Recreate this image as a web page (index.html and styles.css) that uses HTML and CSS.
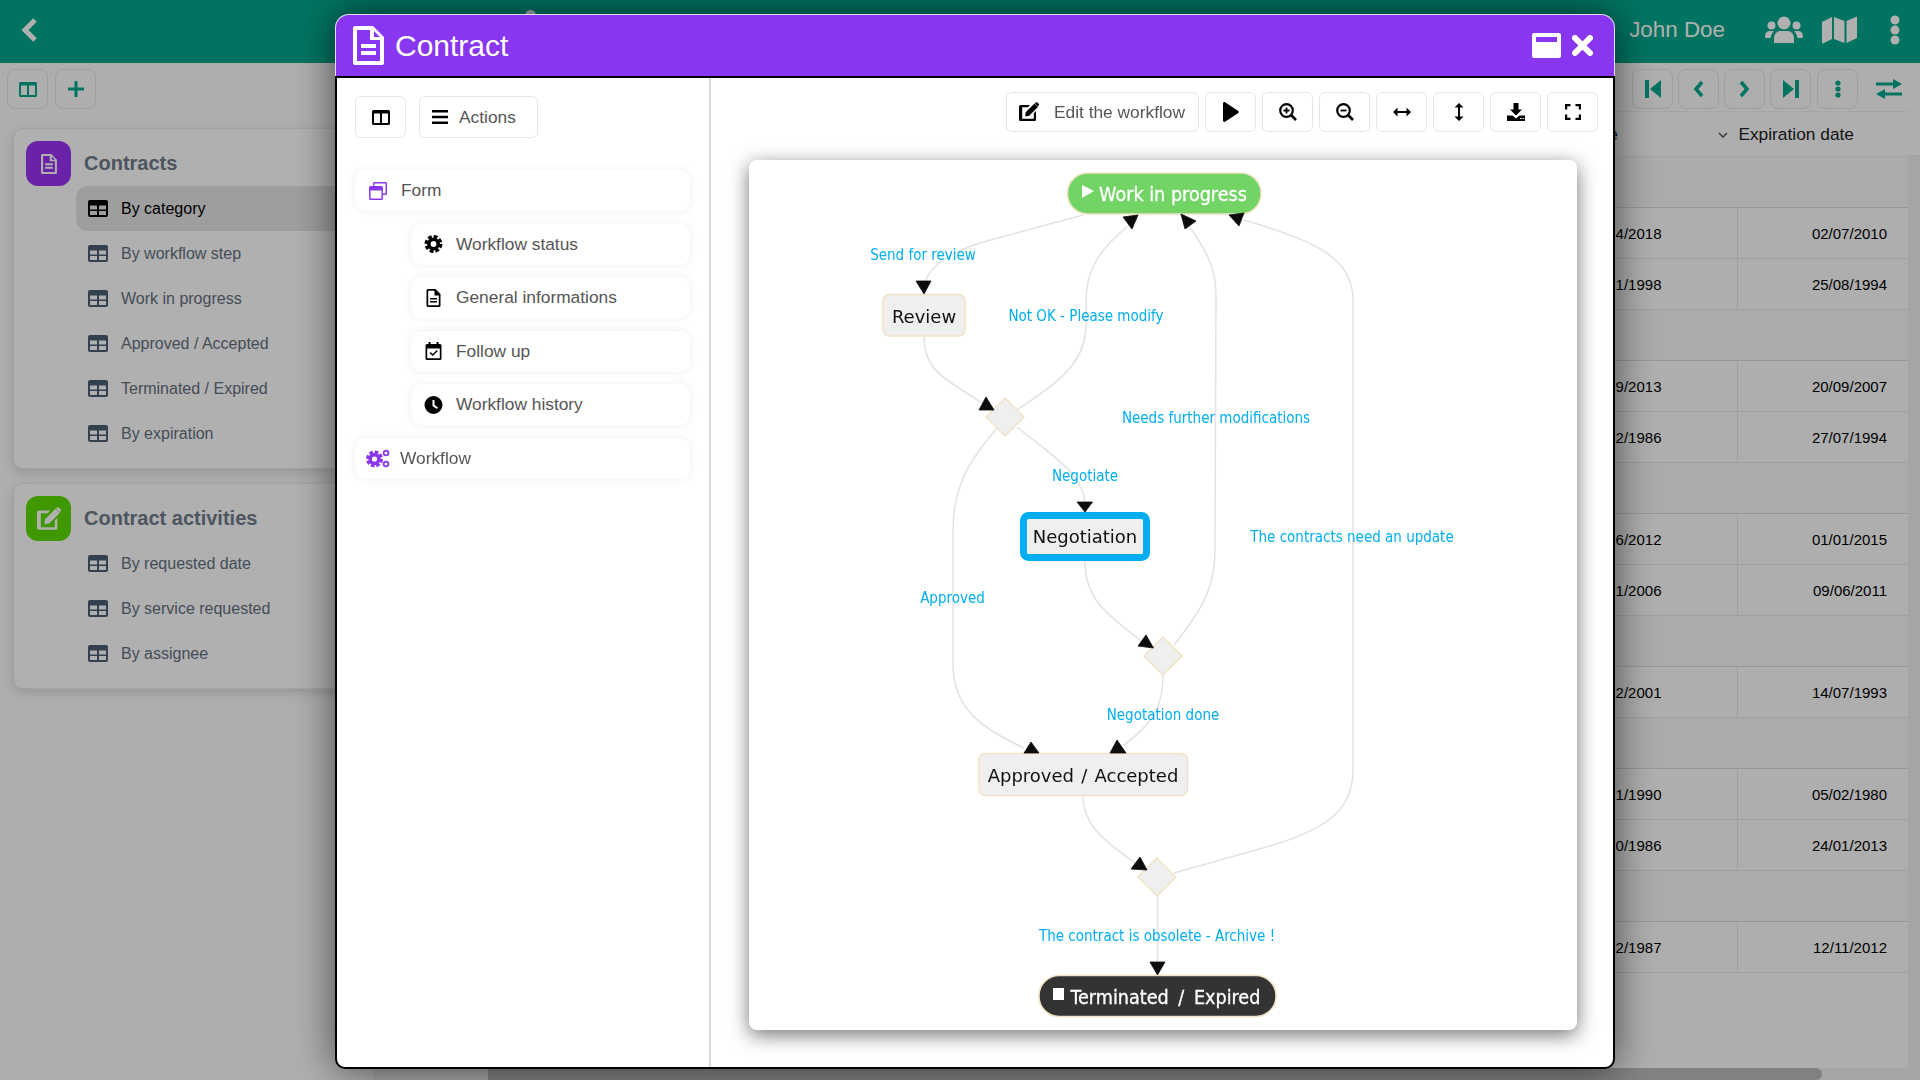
FILE: index.html
```html
<!DOCTYPE html>
<html>
<head>
<meta charset="UTF-8">
<title>Contract</title>
<link rel="stylesheet" href="styles.css">
</head>
<body>
<!-- icon sprites -->
<svg class="sprites" width="0" height="0">
  <symbol id="i-table" viewBox="0 0 20 17"><path fill-rule="evenodd" d="M2 0h16a2 2 0 0 1 2 2v13a2 2 0 0 1-2 2H2a2 2 0 0 1-2-2V2a2 2 0 0 1 2-2zM2 5.5v4h7v-4zM11 5.5v4h7v-4zM2 11v4h7v-4zM11 11v4h7v-4z"/></symbol>
  <symbol id="i-cols" viewBox="0 0 18 15"><path fill-rule="evenodd" d="M1.5 0h15A1.5 1.5 0 0 1 18 1.5v12a1.5 1.5 0 0 1-1.5 1.5h-15A1.5 1.5 0 0 1 0 13.5v-12A1.5 1.5 0 0 1 1.500 0zM2 3.500V13h6V3.500zM10 3.500V13h6V3.500z"/></symbol>
  <symbol id="i-doc" viewBox="0 0 31 39"><path fill-rule="evenodd" d="M2 0h18l11 11v26a2 2 0 0 1-2 2H2a2 2 0 0 1-2-2V2a2 2 0 0 1 2-2zM4 4v31h23V14h-10V4zM21 5v6h6zM8 18h15v4H8zM8 25h15v4H8z"/></symbol>
  <symbol id="i-edit" viewBox="0 0 20 20"><path d="M1.5 3h9.500l-2.200 2.200H3.200v11.600h11.600v-5.600L17 9v8.500A1.500 1.500 0 0 1 15.500 19h-14A1.500 1.500 0 0 1 0 17.500v-13A1.500 1.500 0 0 1 1.500 3z"/><path d="M15.5 1.500l3.500 3.500-8.800 8.800-4 .6.500-4.100zM16.700.6a1.200 1.200 0 0 1 1.700 0l1.200 1.200a1.200 1.200 0 0 1 0 1.700l-.8.800-3-3z"/></symbol>
  <symbol id="i-gear" viewBox="0 0 20 20"><circle cx="10" cy="10" r="5.2" fill="none" stroke="currentColor" stroke-width="4"/><circle cx="10" cy="10" r="8.2" fill="none" stroke="currentColor" stroke-width="3.5" stroke-dasharray="4.2 2.24"/></symbol>
  <symbol id="i-file" viewBox="0 0 14 18"><path fill-rule="evenodd" d="M1.5 0H9l5 5v11.500a1.500 1.500 0 0 1-1.500 1.500h-11A1.500 1.500 0 0 1 0 16.500v-15A1.500 1.500 0 0 1 1.500 0zM1.700 1.700v14.600h10.600V6.500H8V1.700zM3.500 9h7v1.500h-7zM3.500 12h7v1.500h-7z"/></symbol>
  <symbol id="i-cal" viewBox="0 0 16 18"><path fill-rule="evenodd" d="M3 0h2v2h6V0h2v2h1.500A1.500 1.500 0 0 1 16 3.500v13a1.500 1.500 0 0 1-1.500 1.500h-13A1.500 1.500 0 0 1 0 16.500v-13A1.500 1.500 0 0 1 1.500 2H3zM1.700 6.500v9.800h12.600V6.500z"/><path d="M11.300 8l1 1-5 5L4 11l1-1 2.300 2z"/></symbol>
  <symbol id="i-clock" viewBox="0 0 18 18"><path fill-rule="evenodd" d="M9 0a9 9 0 1 1 0 18A9 9 0 0 1 9 0zM8 4v6l4.400 3 1.100-1.600L10 9V4z"/></symbol>
  <symbol id="i-windows" viewBox="0 0 18 18"><path fill="none" stroke="currentColor" stroke-width="1.5" d="M4.800 3.800V1.500a.8.8 0 0 1 .8-.8h10.900a.8.800 0 0 1 .8.800v10a.8.8 0 0 1-.8.800h-2.900"/><rect x=".8" y="4.8" width="12.4" height="12.4" rx=".8" fill="none" stroke="currentColor" stroke-width="1.5"/><rect x="1" y="5" width="12" height="3.5"/></symbol>
  <symbol id="i-gears" viewBox="0 0 24 19"><circle cx="8.5" cy="10" r="4.4" fill="none" stroke="currentColor" stroke-width="3.6"/><circle cx="8.5" cy="10" r="7" fill="none" stroke="currentColor" stroke-width="3" stroke-dasharray="3.6 1.9"/><circle cx="20" cy="4" r="2.4" fill="none" stroke="currentColor" stroke-width="1.8"/><circle cx="20" cy="15" r="2.4" fill="none" stroke="currentColor" stroke-width="1.8"/></symbol>
  <symbol id="i-play" viewBox="0 0 16 20"><path d="M0 1.500C0 .4 1.100-.3 2 .2l13 8.500a1.500 1.500 0 0 1 0 2.600L2 19.800c-.9.500-2-.2-2-1.300z"/></symbol>
  <symbol id="i-zoomin" viewBox="0 0 18 18"><circle cx="7.5" cy="7.5" r="6.3" fill="none" stroke="currentColor" stroke-width="2.2"/><path fill="none" stroke="currentColor" stroke-width="2.6" d="M12 12l5 5"/><path fill="none" stroke="currentColor" stroke-width="1.8" d="M4.500 7.500h6M7.500 4.500v6"/></symbol>
  <symbol id="i-zoomout" viewBox="0 0 18 18"><circle cx="7.5" cy="7.5" r="6.3" fill="none" stroke="currentColor" stroke-width="2.2"/><path fill="none" stroke="currentColor" stroke-width="2.6" d="M12 12l5 5"/><path fill="none" stroke="currentColor" stroke-width="1.8" d="M4.500 7.500h6"/></symbol>
  <symbol id="i-ah" viewBox="0 0 18 10"><path d="M0 5l4.500-4.500V4h9V.5L18 5l-4.500 4.500V6h-9v3.500z"/></symbol>
  <symbol id="i-av" viewBox="0 0 10 18"><path d="M5 0l4.500 4.500H6v9h3.500L5 18 .5 13.500H4v-9H.5z"/></symbol>
  <symbol id="i-down" viewBox="0 0 18 18"><path d="M6.500 0h5v6.500H15l-6 6-6-6h3.500z"/><path fill-rule="evenodd" d="M0 12.500h5.500l3.500 3 3.500-3H18V18H0zM13 15v1h1.500v-1zM15.500 15v1H17v-1z"/></symbol>
  <symbol id="i-full" viewBox="0 0 16 16"><path fill="none" stroke="currentColor" stroke-width="2.2" d="M1.100 5.500V1.100h4.400M10.500 1.100h4.400v4.400M14.900 10.500v4.400h-4.400M5.500 14.900H1.100v-4.400"/></symbol>
</svg>

<header class="topbar">
  <svg class="back" width="17" height="26" viewBox="0 0 17 26"><path d="M14 3L4 13l10 10" fill="none" stroke="currentColor" stroke-width="5"/></svg>
  <span class="topdot"></span>
  <span class="username">John Doe</span>
  <svg class="topicon" width="38" height="28" viewBox="0 0 38 28" fill="currentColor"><circle cx="19" cy="7" r="6.5"/><circle cx="6.5" cy="9.5" r="4"/><circle cx="31.5" cy="9.5" r="4"/><path d="M9 27v-5c0-4 3-7 6-7h8c3 0 6 3 6 7v5z"/><path d="M0 21c0-4 2-6 5-6h4c-2 2-3 4-3.500 7H1a1 1 0 0 1-1-1zM38 21c0-4-2-6-5-6h-4c2 2 3 4 3.500 7H37a1 1 0 0 0 1-1z"/></svg>
  <svg class="topicon mapicon" width="35" height="28" viewBox="0 0 35 28" fill="currentColor"><path d="M0 6l10-5v22L1 27.500c-.5 0-1-.3-1-1zM12 1l10.500 4v22L12 23zM24.500 5L35 .5V22l-10.500 5z"/></svg>
  <svg class="topicon moreicon" width="10" height="30" viewBox="0 0 10 30" fill="currentColor"><circle cx="5" cy="5" r="4.5"/><circle cx="5" cy="15" r="4.5"/><circle cx="5" cy="25" r="4.5"/></svg>
</header>

<div class="page">
  <aside class="sidebar">
    <div class="sidetools">
      <button class="toolbtn"><svg width="18" height="15"><use href="#i-cols"/></svg></button>
      <button class="toolbtn"><svg width="16" height="16" viewBox="0 0 16 16"><path d="M6.500 0h3v6.500H16v3H9.500V16h-3V9.500H0v-3h6.500z"/></svg></button>
    </div>

    <section class="navcard">
      <div class="navhead">
        <span class="navbadge purple"><svg width="16" height="20"><use href="#i-doc"/></svg></span>
        <h3>Contracts</h3>
      </div>
      <a class="navrow active"><svg width="20" height="17"><use href="#i-table"/></svg>By category</a>
      <a class="navrow"><svg width="20" height="17"><use href="#i-table"/></svg>By workflow step</a>
      <a class="navrow"><svg width="20" height="17"><use href="#i-table"/></svg>Work in progress</a>
      <a class="navrow"><svg width="20" height="17"><use href="#i-table"/></svg>Approved / Accepted</a>
      <a class="navrow"><svg width="20" height="17"><use href="#i-table"/></svg>Terminated / Expired</a>
      <a class="navrow"><svg width="20" height="17"><use href="#i-table"/></svg>By expiration</a>
    </section>

    <section class="navcard">
      <div class="navhead">
        <span class="navbadge green"><svg width="24" height="24"><use href="#i-edit"/></svg></span>
        <h3>Contract activities</h3>
      </div>
      <a class="navrow"><svg width="20" height="17"><use href="#i-table"/></svg>By requested date</a>
      <a class="navrow"><svg width="20" height="17"><use href="#i-table"/></svg>By service requested</a>
      <a class="navrow"><svg width="20" height="17"><use href="#i-table"/></svg>By assignee</a>
    </section>
  </aside>

  <main class="listing">
    <div class="pager">
      <button class="toolbtn"><svg width="16" height="18" viewBox="0 0 16 18"><path d="M0 0h4v18H0zM16 0v18L5 9z"/></svg></button>
      <button class="toolbtn"><svg width="11" height="18" viewBox="0 0 11 18"><path d="M9 2L3 9l6 7" fill="none" stroke="currentColor" stroke-width="3.5"/></svg></button>
      <button class="toolbtn"><svg width="11" height="18" viewBox="0 0 11 18"><path d="M2 2l6 7-6 7" fill="none" stroke="currentColor" stroke-width="3.5"/></svg></button>
      <button class="toolbtn"><svg width="16" height="18" viewBox="0 0 16 18"><path d="M16 0h-4v18h4zM0 0v18l11-9z"/></svg></button>
      <button class="toolbtn"><svg width="6" height="18" viewBox="0 0 6 18"><circle cx="3" cy="3" r="2.6"/><circle cx="3" cy="9" r="2.6"/><circle cx="3" cy="15" r="2.6"/></svg></button>
      <svg class="swap" width="26" height="20" viewBox="0 0 26 20"><path d="M0 3.500h17V0l9 5-9 5V6.500H0zM26 13.500H9V10l-9 5 9 5v-3.500h17z"/></svg>
    </div>

    <div class="tablewrap">
      <table class="grid">
        <thead>
          <tr>
            <th class="col-a">e<svg width="10" height="6" viewBox="0 0 10 6"><path d="M1 1l4 4 4-4" fill="none" stroke="currentColor" stroke-width="1.5"/></svg></th>
            <th class="col-b">Expiration date</th>
          </tr>
        </thead>
        <tbody>
          <tr class="group"><td colspan="2"></td></tr>
          <tr><td class="col-a">4/2018</td><td class="col-b">02/07/2010</td></tr>
          <tr><td class="col-a">1/1998</td><td class="col-b">25/08/1994</td></tr>
          <tr class="group"><td colspan="2"></td></tr>
          <tr><td class="col-a">9/2013</td><td class="col-b">20/09/2007</td></tr>
          <tr><td class="col-a">2/1986</td><td class="col-b">27/07/1994</td></tr>
          <tr class="group"><td colspan="2"></td></tr>
          <tr><td class="col-a">6/2012</td><td class="col-b">01/01/2015</td></tr>
          <tr><td class="col-a">1/2006</td><td class="col-b">09/06/2011</td></tr>
          <tr class="group"><td colspan="2"></td></tr>
          <tr><td class="col-a">2/2001</td><td class="col-b">14/07/1993</td></tr>
          <tr class="group"><td colspan="2"></td></tr>
          <tr><td class="col-a">1/1990</td><td class="col-b">05/02/1980</td></tr>
          <tr><td class="col-a">0/1986</td><td class="col-b">24/01/2013</td></tr>
          <tr class="group"><td colspan="2"></td></tr>
          <tr><td class="col-a">2/1987</td><td class="col-b">12/11/2012</td></tr>
        </tbody>
      </table>
      <div class="vscroll"></div>
    </div>
    <div class="hscroll"><div class="hthumb"></div></div>
  </main>
</div>

<div class="backdrop"></div>

<div class="modal">
  <div class="modal-title">
    <svg width="31" height="39"><use href="#i-doc"/></svg>
    <span class="modal-name">Contract</span>
    <svg class="winbtn" width="29" height="25" viewBox="0 0 29 25"><path fill-rule="evenodd" d="M2 0h25a2 2 0 0 1 2 2v21a2 2 0 0 1-2 2H2a2 2 0 0 1-2-2V2a2 2 0 0 1 2-2zM4 4v5h21V4z"/></svg>
    <svg class="winbtn" width="21" height="21" viewBox="0 0 21 21"><path d="M3 3l15 15M18 3L3 18" stroke="currentColor" stroke-width="6" stroke-linecap="round"/></svg>
  </div>

  <div class="modal-body">
    <div class="formnav">
      <div class="formtools">
        <button class="btn square"><svg width="18" height="15"><use href="#i-cols"/></svg></button>
        <button class="btn actions"><svg width="16" height="14" viewBox="0 0 16 14"><path d="M0 0h16v2.500H0zM0 5.700h16v2.500H0zM0 11.500h16V14H0z"/></svg>Actions</button>
      </div>
      <div class="formlist">
        <a class="formrow"><svg class="accent" width="18" height="18"><use href="#i-windows"/></svg>Form</a>
        <a class="formrow sub"><svg width="18" height="18"><use href="#i-gear"/></svg>Workflow status</a>
        <a class="formrow sub"><svg width="14" height="18"><use href="#i-file"/></svg>General informations</a>
        <a class="formrow sub"><svg width="16" height="18"><use href="#i-cal"/></svg>Follow up</a>
        <a class="formrow sub"><svg width="18" height="18"><use href="#i-clock"/></svg>Workflow history</a>
        <a class="formrow wide"><svg class="accent" width="24" height="19"><use href="#i-gears"/></svg>Workflow</a>
      </div>
    </div>

    <div class="flowpane">
      <div class="flowtools">
        <button class="btn edit"><svg width="20" height="20"><use href="#i-edit"/></svg>Edit the workflow</button>
        <button class="btn icon"><svg width="16" height="20"><use href="#i-play"/></svg></button>
        <button class="btn icon"><svg width="18" height="18"><use href="#i-zoomin"/></svg></button>
        <button class="btn icon"><svg width="18" height="18"><use href="#i-zoomout"/></svg></button>
        <button class="btn icon"><svg width="18" height="10"><use href="#i-ah"/></svg></button>
        <button class="btn icon"><svg width="10" height="18"><use href="#i-av"/></svg></button>
        <button class="btn icon"><svg width="18" height="18"><use href="#i-down"/></svg></button>
        <button class="btn icon"><svg width="16" height="16"><use href="#i-full"/></svg></button>
      </div>

      <div class="flowcard">
        <!-- workflow chart, viewBox keeps the chart's own coordinates -->
        <svg class="chart" width="828" height="870" viewBox="749 160 828 870">
          <g class="edges">
            <path d="M1083 215L983 242C950 252 924 268 924 290"/>
            <path d="M1017 410C1055 384 1086 365 1086 325L1086 300C1086 265 1105 245 1129 225"/>
            <path d="M1174 645C1200 612 1215 590 1215 550L1216 295C1216 265 1203 245 1186 222"/>
            <path d="M1174 873L1270 846C1330 828 1353 808 1353 770L1353 300C1353 255 1310 240 1244 220"/>
            <path d="M924 336C924 372 945 378 985 405"/>
            <path d="M1017 427C1055 458 1085 475 1085 505"/>
            <path d="M997 428C970 460 953 485 953 530L953 665C953 710 985 730 1024 748"/>
            <path d="M1085 561C1085 600 1105 612 1146 645"/>
            <path d="M1163 675C1163 705 1155 722 1124 745"/>
            <path d="M1083 796C1083 825 1105 842 1138 865"/>
            <path d="M1157.5 895L1157.5 962"/>
          </g>

          <g class="nodes">
            <rect class="node start" x="1067.5" y="173" width="193.5" height="41" rx="20"/>
            <rect class="node" x="883" y="294.5" width="82" height="41.5" rx="6"/>
            <path class="node" d="M1005 398L1024 417 1005 436 986 417z"/>
            <rect class="node current" x="1023.5" y="515.5" width="123" height="42" rx="5"/>
            <path class="node" d="M1163 637L1182 656 1163 675 1144 656z"/>
            <rect class="node" x="979" y="753.5" width="208.5" height="42" rx="6"/>
            <path class="node" d="M1157 858L1176 877 1157 896 1138 877z"/>
            <rect class="node end" x="1039" y="975.5" width="237" height="41" rx="20"/>
          </g>

          <g class="arrows">
            <path d="M916 281L931 281 924 294z"/>
            <path d="M1123 217L1138 215 1132 229z"/>
            <path d="M1181 214L1196 221 1185 229z"/>
            <path d="M1229 215L1244 213 1239 226z"/>
            <path d="M986 397L994 410 979 410z"/>
            <path d="M1077 502L1092.5 502 1085 512z"/>
            <path d="M1031 742L1039 753 1024 753z"/>
            <path d="M1146 635L1153.5 648 1138 646z"/>
            <path d="M1117 740L1126 753 1110 753z"/>
            <path d="M1140 857L1147 870 1131 869z"/>
            <path d="M1150 962L1165 962 1157.5 975z"/>
          </g>

          <g class="labels">
            <text x="923" y="260">Send for review</text>
            <text x="1086" y="321">Not OK - Please modify</text>
            <text x="1216" y="423">Needs further modifications</text>
            <text x="1085" y="481">Negotiate</text>
            <text x="1352" y="542">The contracts need an update</text>
            <text x="952.5" y="603">Approved</text>
            <text x="1163" y="720">Negotation done</text>
            <text x="1157" y="941">The contract is obsolete - Archive !</text>
          </g>

          <g class="titles">
            <path class="white" d="M1082 185L1094 191 1082 198z"/>
            <text class="white bold" x="1173" y="201">Work in progress</text>
            <text x="924" y="323">Review</text>
            <text x="1085" y="543">Negotiation</text>
            <text class="spaced" x="1083" y="782">Approved / Accepted</text>
            <rect class="white" x="1053" y="988" width="11" height="12"/>
            <text class="white bold spaced-wide" x="1165.500" y="1004">Terminated / Expired</text>
          </g>
        </svg>
      </div>
    </div>
  </div>
</div>
</body>
</html>
```

FILE: styles.css
```css
*{box-sizing:border-box}
html,body{margin:0;height:100%;overflow:hidden}
body{font-family:"Liberation Sans",Arial,sans-serif;background:#fcfcfc;color:#333}
svg{fill:currentColor;display:block;flex:none}
button{font-family:inherit;cursor:pointer}
.sprites{position:absolute}

/* top bar */
.topbar{height:63px;background:#00a88c;color:#fff;display:flex;align-items:center;padding-left:21px}
.back{margin-top:-4px}
.topdot{width:11px;height:11px;border-radius:50%;background:#fff;margin-left:487px;margin-top:-32px}
.username{font-size:22.4px;margin-left:auto;margin-top:-3px}
.topicon{margin-left:40px;margin-top:-3px}
.mapicon{margin-left:19px}
.moreicon{margin-left:33px;margin-right:20px}

.page{display:flex;height:1017px}

/* left navigation */
.sidebar{width:373px;flex:none;padding:6px 0 0 7px}
.sidetools{display:flex;gap:7px;margin-bottom:19px}
.toolbtn{width:41px;height:40px;background:#fcfcfc;border:1px solid #e6e6e6;border-radius:8px;color:#00a88c;display:flex;align-items:center;justify-content:center;padding:0}
.navcard{margin:0 0 14px 6px;background:#fff;border:1px solid #ececec;border-radius:10px;padding:12px 0 12px 12px;box-shadow:0 4px 12px rgba(0,0,0,.14)}
.navhead{display:flex;align-items:center;gap:13px;height:45px}
.navhead h3{margin:0;font-size:20px;color:#6f7b8c}
.navbadge{width:45px;height:45px;border-radius:12px;display:flex;align-items:center;justify-content:center;color:#fff}
.purple{background:#9a33f4}
.green{background:#5ddc00}
.navrow{height:45px;margin-left:50px;padding-left:12px;display:flex;align-items:center;gap:13px;font-size:16px;color:#64707f;border-radius:12px 0 0 12px}
.navrow svg{color:#4b5d74}
.navrow.active{background:#e5e5e5;color:#000}
.navrow.active svg{color:#000}

/* listing behind the dialog */
.listing{flex:1;display:flex;flex-direction:column;min-width:0}
.pager{display:flex;justify-content:flex-end;align-items:center;gap:5px;padding:4px 18px 0 0;height:48px}
.pager .toolbtn:last-of-type{margin-left:1px}
.swap{color:#00a88c;margin-left:13px}
.tablewrap{flex:1;display:flex;justify-content:flex-end;min-height:0}
.grid{border-collapse:collapse;table-layout:fixed;width:301px;align-self:flex-start;font-size:15px;color:#000}
.grid th{height:45px;font-weight:normal;font-size:17.33px;text-align:right;border-top:1px solid #f0f0f0;border-bottom:1px solid #eee;color:#222}
.grid th svg{display:inline-block;margin-left:100px;vertical-align:middle;color:#555}
.grid td{height:51px;text-align:right;border-bottom:1px solid #e6e6e6}
.grid .col-a{width:130px;padding:0 75px 0 0}
.grid .col-b{width:171px;padding:0 21px 0 0;border-left:1px solid #e6e6e6}
.grid th.col-a{padding-right:9px}
.grid th.col-b{padding-right:54px;border-left:none}
.grid .group td{border-bottom-color:#ddd;background:#f8f8f8}
.vscroll{width:12px;flex:none;background:#f0f0f0;margin-top:44px}
.hscroll{height:12px;flex:none;background:#f0f0f0;display:flex;padding-left:115px}
.hthumb{width:1334px;background:#bcbcbc;border-radius:0 6px 6px 0}

.backdrop{position:fixed;inset:0;background:rgba(0,0,0,.31)}

/* dialog */
.modal{position:fixed;left:335px;top:14px;width:1280px;height:1055px;display:flex;flex-direction:column;box-shadow:0 0 40px rgba(0,0,0,.6);border-radius:14px 14px 10px 10px}
.modal-title{height:62px;flex:none;background:#8936f0;color:#fff;border:1px solid #e6dcf5;border-bottom:none;border-radius:14px 14px 0 0;display:flex;align-items:center;padding:0 21px 0 17px}
.modal-name{font-size:30px;margin-left:11px;margin-right:auto}
.winbtn{margin-left:11px}
.modal-body{flex:1;min-height:0;display:flex;background:#fff;border:2px solid #000;border-radius:0 0 10px 10px;overflow:hidden}

.formnav{width:374px;flex:none;border-right:2px solid #d8d8d8;padding:18px 19px 0 18px}
.formtools{display:flex;gap:13px;margin-bottom:32px}
.btn{height:42px;background:#fff;border:1px solid #e6e6e6;border-radius:6px;color:#000;display:flex;align-items:center;justify-content:center;padding:0;font-size:17.33px}
.square{width:51px}
.actions{width:119px;justify-content:flex-start;padding-left:12px;gap:11px;color:#555}
.actions svg{color:#000}
.formlist{display:flex;flex-direction:column;gap:12.6px}
.formrow{height:41px;background:#fff;border-radius:10px;box-shadow:0 0 8px rgba(0,0,0,.07);display:flex;align-items:center;font-size:17.33px;color:#555;padding-left:14px}
.formrow > svg{margin-right:14px;color:#000}
.formrow .accent{color:#8936f0}
.formrow.wide{padding-left:11px}
.formrow.wide > svg{margin-right:10px}
.formrow.sub{margin-left:56px;padding-left:0}
.formrow.sub > svg{width:45px;margin:0}

.flowpane{flex:1;min-width:0;display:flex;flex-direction:column;padding:14px 15px 0 38px}
.flowtools{display:flex;justify-content:flex-end;gap:6px}
.flowtools .btn{height:40px}
.flowtools .icon{width:51px}
.flowtools .edit{width:193px;justify-content:flex-start;padding-left:12px;gap:15px;color:#555}
.flowtools .edit svg{color:#000}
.flowcard{margin:28px 21px 0 0;height:870px;background:#fff;border-radius:8px;box-shadow:0 5px 20px rgba(0,0,0,.55)}

/* chart */
.edges path{fill:none;stroke:#e2e2e2;stroke-width:1.5}
.node{fill:#efefef;stroke:#f3e3c6;stroke-width:1.5}
.node.start{fill:#72d464}
.node.end{fill:#333}
.node.current{stroke:#00aeef;stroke-width:7}
.arrows path{fill:#0c0c0c;stroke:#0c0c0c;stroke-width:.8}
.labels text{font-family:"DejaVu Sans Condensed","DejaVu Sans",sans-serif;font-size:15px;fill:#00aeef;text-anchor:middle}
.titles text{font-family:"DejaVu Sans",sans-serif;font-size:18px;fill:#111;text-anchor:middle}
.titles .spaced{word-spacing:1.5px}
.titles .white{fill:#fff}
.titles .bold{font-family:"DejaVu Sans Condensed","DejaVu Sans",sans-serif;font-size:19.6px;stroke:#fff;stroke-width:.3}
.titles .spaced-wide{word-spacing:4px}
```
